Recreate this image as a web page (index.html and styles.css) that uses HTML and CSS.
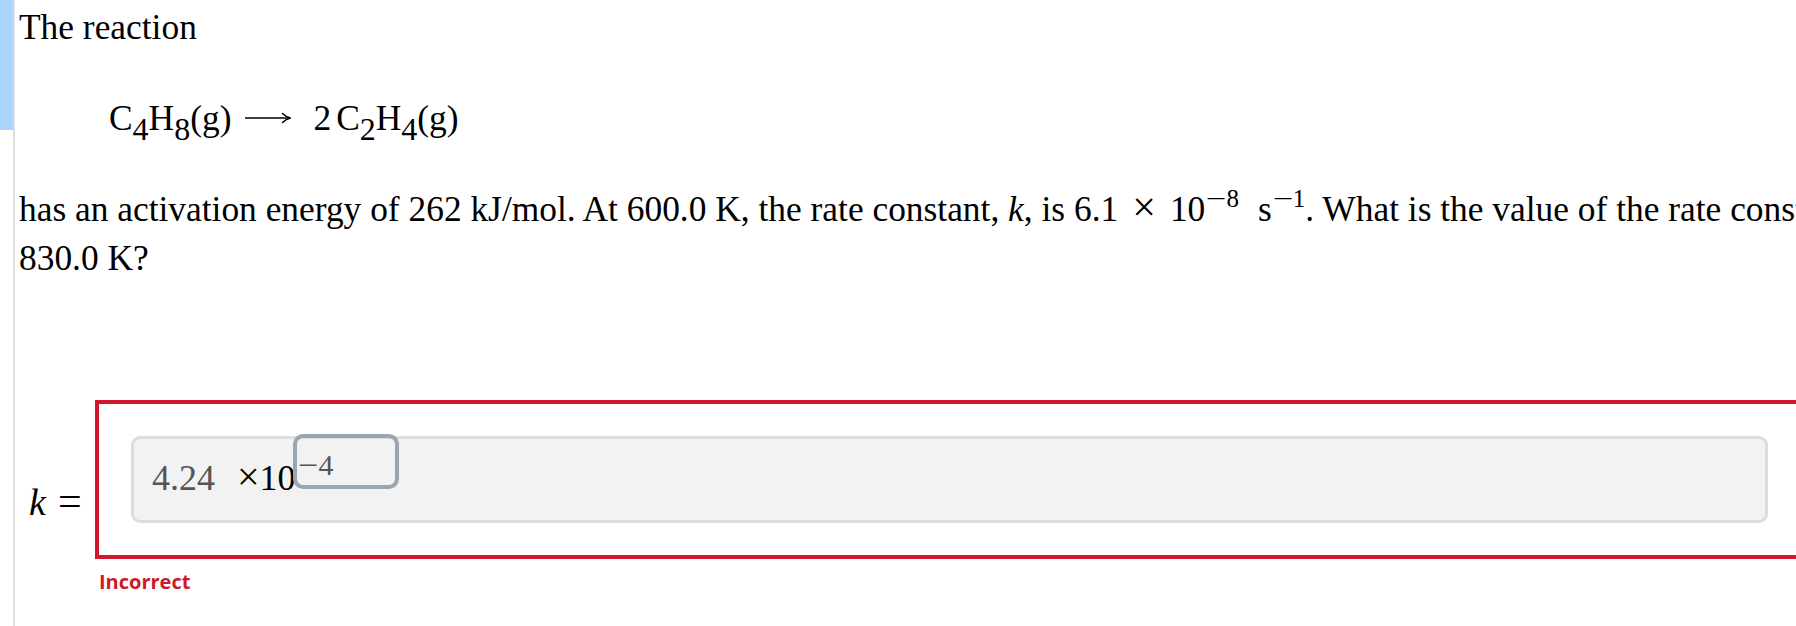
FILE: index.html
```html
<!DOCTYPE html>
<html lang="en">
<head>
<meta charset="utf-8">
<title>Rate constant question</title>
<link rel="stylesheet" href="styles.css">
</head>
<body>
<div class="page">
  <div class="rail"><div class="rail-mark"></div></div>
  <main class="content">
    <p class="intro">The reaction</p>
    <p class="equation">C<sub>4</sub>H<sub>8</sub>(g)<svg class="arrow" width="46" height="14" viewBox="0 0 46 14"><path d="M0 7H45" stroke="#000" stroke-width="1.6" fill="none"/><path d="M37.5 2.5C39.8 4.8 42.2 6.2 45.6 7C42.2 7.8 39.8 9.2 37.5 11.5" stroke="#000" stroke-width="1.5" fill="none" stroke-linecap="round"/></svg>2<span class="thin"></span>C<sub>2</sub>H<sub>4</sub>(g)</p>
    <p class="question">has an activation energy of 262 kJ/mol. At 600.0 K, the rate constant, <i>k</i>, is 6.1<span class="op">×</span>10<sup><span class="mn">−</span>8</sup><span class="unit">s</span><sup><span class="mn">−</span>1</sup>. What is the value of the rate constant at<br>830.0 K?</p>
    <div class="answer-row">
      <div class="label"><i class="var">k</i><span class="eq">=</span></div>
      <div class="answer-col">
        <div class="answer-box">
          <div class="field">
            <span class="mantissa">4.24</span>
            <span class="times"><span class="x">×</span>10</span>
            <span class="exp"><span class="mn">−</span>4</span>
          </div>
        </div>
        <div class="feedback">Incorrect</div>
      </div>
    </div>
  </main>
</div>
</body>
</html>
```

FILE: styles.css
```css
html, body {
  margin: 0;
  padding: 0;
  overflow: hidden;
  background: #ffffff;
}

body {
  font-family: "Liberation Serif", "Times New Roman", serif;
  color: #000;
}

.page {
  display: flex;
  min-height: 626px;
}

.rail {
  flex: 0 0 13px;
  border-right: 2px solid #dedede;
}

.rail-mark {
  height: 130px;
  background: #aad4fc;
}

.content {
  padding-left: 4px;
  white-space: nowrap;
}

.content p {
  margin: 0;
  font-size: 35.4px;
}

.intro {
  margin-top: 3px !important;
  line-height: 48px;
}

.equation {
  margin-top: 43px !important;
  padding-left: 90px;
  line-height: 48px;
}

.equation sub {
  font-size: 32px;
  line-height: 0;
  vertical-align: -10px;
}

.arrow {
  vertical-align: 5px;
  margin-left: 14px;
  margin-right: 22px;
}

.thin {
  display: inline-block;
  width: 5px;
}

.question {
  margin-top: 43px !important;
  line-height: 49px;
}

.question sup {
  font-size: 25px;
  line-height: 0;
  vertical-align: 14px;
  margin-left: 1px;
}

.mn {
  display: inline-block;
  transform: scaleX(1.45);
  margin: 0 3px 0 3px;
}

.op {
  font-size: 42px;
  line-height: 0;
  margin: 0 14px 0 14px;
}

.unit {
  margin-left: 19px;
}

.answer-row {
  display: flex;
  align-items: flex-start;
  margin-top: 117px;
}

.label {
  margin-left: 10px;
  margin-top: 78px;
  font-size: 36px;
  line-height: 48px;
  width: 66px;
  flex-shrink: 0;
}

.label .var {
  font-size: 38px;
}

.label .eq {
  margin-left: 12px;
  font-size: 42px;
  line-height: 0;
}

.answer-col {
  flex-shrink: 0;
}

.answer-box {
  box-sizing: border-box;
  width: 1709px;
  border: 4px solid #d0172b;
  padding: 32px;
}

.field {
  box-sizing: border-box;
  height: 87px;
  display: flex;
  align-items: flex-start;
  padding-left: 18px;
  background: #f2f2f2;
  border: 3px solid #dddddd;
  border-radius: 9px;
  font-size: 36px;
  line-height: 36px;
}

.mantissa {
  margin-top: 21px;
  color: #555555;
}

.times {
  margin-top: 21px;
  margin-left: 22px;
  color: #000;
}

.times .x {
  font-size: 40px;
  line-height: 0;
}

.exp {
  box-sizing: border-box;
  width: 106px;
  height: 55px;
  margin-top: -5px;
  margin-left: -3px;
  padding: 14px 0 0 1px;
  border: 4px solid #9aa5b0;
  border-radius: 10px;
  font-size: 30px;
  line-height: 25px;
  color: #555555;
}

.exp .mn {
  transform: scaleX(1.2);
  margin: 0 2px 0 2px;
}

.feedback {
  margin-top: 11px;
  padding-left: 4px;
  font-family: "Open Sans", "Liberation Sans", sans-serif;
  font-weight: 700;
  font-size: 20px;
  line-height: 24px;
  color: #d0172b;
}
```
